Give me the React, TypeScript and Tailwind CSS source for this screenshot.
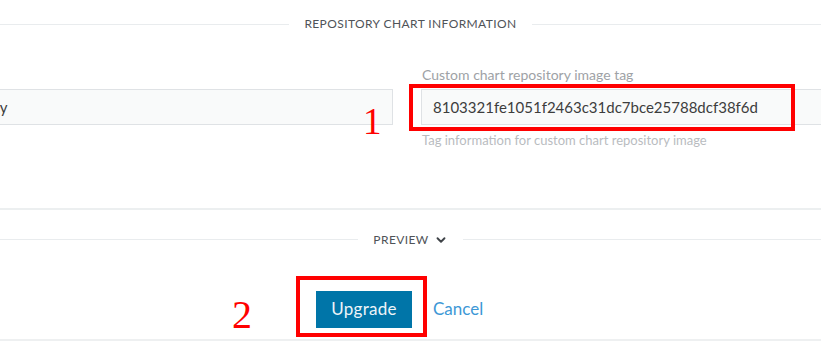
import { ChevronDown } from 'lucide-react';

const font = { fontFamily: 'Lato, "Open Sans", sans-serif' };

function SectionTitle({ label, chevron }: { label: string; chevron?: boolean }) {
  return (
    <div className="flex items-center h-5">
      <div className="flex-1 h-px bg-[#e9ecee]" />
      <div className="px-[15px] flex items-center gap-[5px] text-[12px] tracking-[0.4px] text-[#4f5358] uppercase">
        {label}
        {chevron && <ChevronDown size={14} strokeWidth={3.2} className="text-[#3f4348]" />}
      </div>
      <div className="flex-1 h-px bg-[#e9ecee]" />
    </div>
  );
}

export default function App() {
  return (
    <div className="relative w-[821px] h-[341px] bg-white overflow-hidden" style={font}>
      <div className="pt-[14px]">
        <SectionTitle label="Repository Chart Information" />
      </div>

      <div className="flex gap-[28px] ml-[-63px] mt-[30px]">
        <div className="w-[456px] shrink-0">
          <div className="h-[20px]" />
          <div className="mt-[5px] h-[36px] border border-[#dfe2e5] bg-[#f9fafa] flex items-center pl-[20px] text-[15px] text-[#3d3d3d]">
            registry
          </div>
        </div>
        <div className="w-[430px] shrink-0">
          <div className="h-[20px] text-[14px] text-[#9ea2a6] flex items-center pl-px">
            Custom chart repository image tag
          </div>
          <div className="mt-[5px] h-[36px] border border-[#dfe2e5] bg-[#f9fafa] flex items-center pl-[11px] text-[15px] text-[#3d3d3d]">
            8103321fe1051f2463c31dc7bce25788dcf38f6d
          </div>
          <div className="mt-[6px] text-[13px] text-[#b9bcbf] pl-px">
            Tag information for custom chart repository image
          </div>
        </div>
      </div>

      <div className="mt-[57px] h-[2px] bg-[#eceff0]" />

      <div className="mt-[20px]">
        <SectionTitle label="Preview" chevron />
      </div>

      <div className="flex items-center gap-[21px] pl-[316px] mt-[41px]">
        <button className="w-[96px] h-[37px] bg-[#0075a8] text-[#eef4f8] text-[17px] font-normal tracking-[0.3px]">
          Upgrade
        </button>
        <span className="text-[17px] text-[#3d98d6]">Cancel</span>
      </div>

      <div className="absolute left-0 right-0 bottom-0 h-[2px] bg-[#eef0f1]" />

      {/* annotations */}
      <div className="absolute left-[409px] top-[84px] w-[386px] h-[47px] border-4 border-[#ff0000]" />
      <div className="absolute left-[296px] top-[276px] w-[131px] h-[61px] border-4 border-[#ff0000]" />
      <div
        className="absolute left-[363px] top-[103px] text-[37px] leading-none text-[#ff0000]"
        style={{ fontFamily: '"Liberation Serif", serif' }}
      >
        1
      </div>
      <div
        className="absolute left-[232px] top-[295px] text-[40px] leading-none text-[#ff0000]"
        style={{ fontFamily: '"Liberation Serif", serif' }}
      >
        2
      </div>
    </div>
  );
}
